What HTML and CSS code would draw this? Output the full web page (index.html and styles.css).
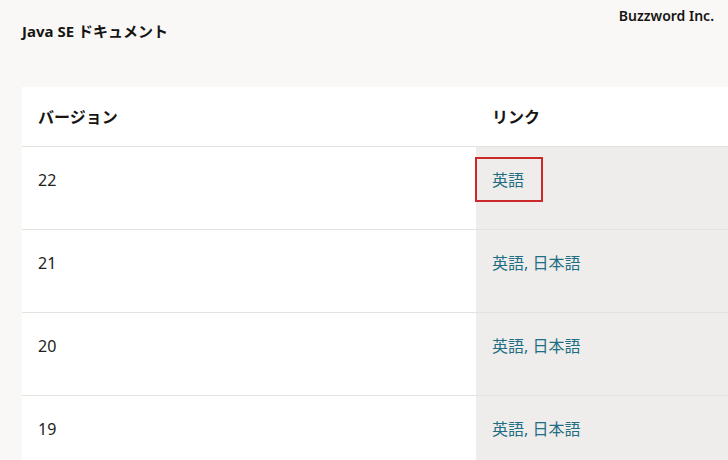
FILE: index.html
```html
<!DOCTYPE html>
<html lang="ja">
<head>
<meta charset="utf-8">
<title>Java SE ドキュメント</title>
<link rel="stylesheet" href="styles.css">
</head>
<body>
<header class="topbar">
  <h1 class="title">Java SE ドキュメント</h1>
  <div class="brand">Buzzword Inc.</div>
</header>
<main class="content">
  <table class="docs">
    <thead>
      <tr><th class="col-ver">バージョン</th><th class="col-link">リンク</th></tr>
    </thead>
    <tbody>
      <tr><td class="col-ver">22</td><td class="col-link"><span class="linkwrap"><a href="#">英語</a><span class="highlight"></span></span></td></tr>
      <tr><td class="col-ver">21</td><td class="col-link"><a href="#">英語</a>, <a href="#">日本語</a></td></tr>
      <tr><td class="col-ver">20</td><td class="col-link"><a href="#">英語</a>, <a href="#">日本語</a></td></tr>
      <tr><td class="col-ver">19</td><td class="col-link"><a href="#">英語</a>, <a href="#">日本語</a></td></tr>
    </tbody>
  </table>
</main>
</body>
</html>
```

FILE: styles.css
```css
html, body {
  margin: 0;
  padding: 0;
  background: #f9f8f6;
  overflow: hidden;
}
body {
  font-family: "Noto Sans", "Noto Sans CJK JP", sans-serif;
  color: #161513;
  width: 728px;
  height: 460px;
}
.topbar {
  display: flex;
  justify-content: space-between;
  align-items: flex-start;
  height: 87px;
  padding: 0 14px 0 22px;
  box-sizing: border-box;
}
.title {
  margin: 21px 0 0 0;
  font-size: 15px;
  line-height: 20px;
  font-weight: 700;
}
.brand {
  margin-top: 6px;
  font-size: 14px;
  line-height: 20px;
  font-weight: 600;
}
.content {
  padding-left: 22px;
}
.docs {
  border-collapse: collapse;
  width: 100%;
  table-layout: fixed;
  background: #ffffff;
  font-size: 16px;
  line-height: 22px;
}
.docs th {
  text-align: left;
  font-weight: 700;
  padding: 19px 16px 18px;
  border-bottom: 1px solid #e4e2df;
  background: #ffffff;
}
.docs td {
  vertical-align: top;
  padding: 22px 16px 38px;
  border-bottom: 1px solid #e4e2df;
  color: #222220;
}
.col-ver {
  width: 422px;
}
td.col-link {
  background: #eeedeb;
  color: #1f6e83;
}
.docs a {
  color: #1f6e83;
  text-decoration: none;
}
.linkwrap {
  position: relative;
  display: inline-block;
}
.highlight {
  position: absolute;
  left: -17px;
  top: -12px;
  width: 64px;
  height: 41px;
  border: 2px solid #cc2a2a;
}
```
